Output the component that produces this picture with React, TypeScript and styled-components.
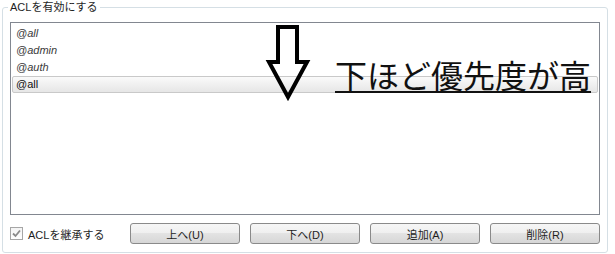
import styled, { createGlobalStyle } from "styled-components"

const Global = createGlobalStyle`
    body{
        margin: 0;
        background: #fff;
        font-family: "Liberation Sans", "Noto Sans CJK JP", sans-serif;
        color: #1e1e1e;
    }
`

const items = [
    { name: "@all", inherited: true },
    { name: "@admin", inherited: true },
    { name: "@auth", inherited: true },
    { name: "@all", inherited: false, selected: true },
]

const buttons = ["上へ(U)", "下へ(D)", "追加(A)", "削除(R)"]

// COMPONENT //
const App = () => {
    return (
        <Page>
            <Global />
            <Group>
                <Legend>ACLを有効にする</Legend>
                <List>
                    {items.map((it, i) => (
                        <Row key={i} $inherited={it.inherited} $selected={!!it.selected}>
                            {it.name}
                        </Row>
                    ))}
                    <Arrow width="48" height="80" viewBox="0 0 48 80">
                        <polygon
                            points="14,4 33,4 33,39 43,39 24,74 5,39 14,39"
                            fill="none"
                            stroke="#000"
                            strokeWidth="4"
                            strokeLinejoin="miter"
                        />
                    </Arrow>
                    <Note>下ほど優先度が高</Note>
                </List>
                <Bottom>
                    <Check>
                        <Box>
                            <svg width="9" height="9" viewBox="0 0 9 9">
                                <path d="M1 4.5 L3.5 7 L8 1.5" fill="none" stroke="#8a8a8a" strokeWidth="1.8" />
                            </svg>
                        </Box>
                        ACLを継承する
                    </Check>
                    {buttons.map((b) => (
                        <Button key={b}>{b}</Button>
                    ))}
                </Bottom>
            </Group>
        </Page>
    )
}

export default App

// STYLESHEET //
const Page = styled.div`
    width: 606px;
    padding-left: 2px;
`

const Group = styled.fieldset`
    margin: 0;
    min-width: 0;
    border: 1px solid #d5dfe5;
    border-radius: 3px;
    padding: 7px 7px 8px 7px;
    display: flex;
    flex-direction: column;
    gap: 8px;
`

const Legend = styled.legend`
    font-size: 11px;
    line-height: 15px;
    padding: 0 2px;
    margin-left: -2px;
    color: #1e1e1e;
`

const List = styled.div`
    position: relative;
    height: 189px;
    border: 1px solid #828790;
    padding: 2px 0 0 1px;
    background: #fff;
`

const Row = styled.div<{ $inherited: boolean; $selected: boolean }>`
    height: 17px;
    box-sizing: border-box;
    padding-left: 3px;
    font-size: 11px;
    line-height: 15px;
    font-style: ${({ $inherited }) => ($inherited ? "italic" : "normal")};
    color: ${({ $inherited }) => ($inherited ? "#3a3a3a" : "#111")};
    border: 1px solid ${({ $selected }) => ($selected ? "#c9c9c9" : "transparent")};
    border-radius: 2px;
    margin-right: 1px;
    background: ${({ $selected }) =>
        $selected ? "linear-gradient(#fafafa, #e6e6e6)" : "transparent"};
`

const Arrow = styled.svg`
    position: absolute;
    left: 253px;
    top: 0;
`

const Note = styled.div`
    position: absolute;
    left: 324px;
    top: 31px;
    font-family: "Noto Sans CJK JP", sans-serif;
    font-size: 32px;
    line-height: 40px;
    color: #111;
    text-decoration: underline;
    text-decoration-thickness: 2px;
    text-underline-offset: 3px;
    white-space: nowrap;
`

const Bottom = styled.div`
    display: flex;
    align-items: center;
    gap: 10px;
    height: 21px;
`

const Check = styled.label`
    width: 110px;
    display: flex;
    align-items: center;
    gap: 5px;
    font-size: 11px;
    color: #1e1e1e;
`

const Box = styled.span`
    width: 11px;
    height: 11px;
    border: 1px solid #a6a6a6;
    background: linear-gradient(#f4f4f4, #fff);
    display: flex;
    align-items: center;
    justify-content: center;
`

const Button = styled.button`
    width: 110px;
    height: 21px;
    border: 1px solid #8a8a8a;
    border-radius: 3px;
    background: linear-gradient(#f6f6f6 0%, #efefef 50%, #e3e3e3 50%, #d6d6d6 100%);
    font-family: "Liberation Sans", "Noto Sans CJK JP", sans-serif;
    font-size: 11px;
    color: #1e1e1e;
    padding: 0;
`
